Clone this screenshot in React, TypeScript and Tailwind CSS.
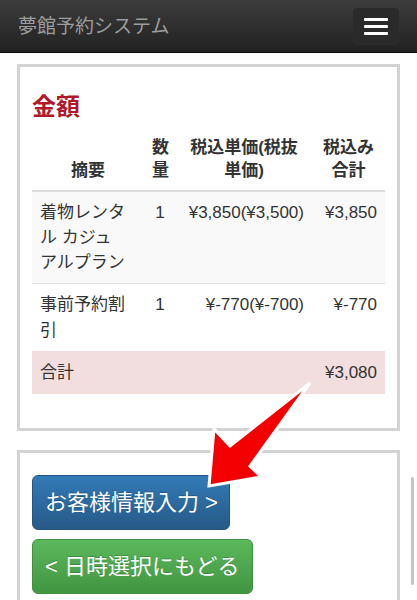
import React from "react";

const font = { fontFamily: '"Liberation Sans", "Noto Sans CJK JP", sans-serif' };

export default function App() {
  return (
    <div className="relative w-full min-h-[600px] bg-white text-[#333]" style={font}>
      {/* Navbar */}
      <div className="h-[53px] flex items-center justify-between bg-gradient-to-b from-[#3c3c3c] to-[#222] border-b border-[#080808] pl-[18px] pr-[18px]">
        <span className="text-[19px] text-[#9d9d9d] leading-none">夢館予約システム</span>
        <div className="w-[46px] h-[37px] border border-[#2c2c2c] rounded-[4px] flex flex-col items-center justify-center gap-[4px] bg-[#2a2a2a]">
          <span className="block w-[24px] h-[3px] bg-white rounded-[1px]" />
          <span className="block w-[24px] h-[3px] bg-white rounded-[1px]" />
          <span className="block w-[24px] h-[3px] bg-white rounded-[1px]" />
        </div>
      </div>

      <div className="px-[17px] pt-[11px] flex flex-col gap-[19px]">
        {/* Price panel */}
        <div className="border-[3px] border-[#d3d3d3] px-3 pt-[27px] pb-[34px]">
          <h3 className="text-[24px] font-bold leading-[26px] text-[#b0192b] mb-[8px]">金額</h3>
          <table className="w-full table-fixed border-collapse text-[17px]">
            <colgroup>
              <col className="w-[112px]" />
              <col className="w-[32px]" />
              <col className="w-[136px]" />
              <col className="w-[73px]" />
            </colgroup>
            <thead>
              <tr className="border-b-2 border-[#ddd]">
                <th className="p-2 align-bottom text-center font-bold leading-[23px]">摘要</th>
                <th className="p-2 align-bottom text-center font-bold leading-[23px]">
                  数<br />量
                </th>
                <th className="py-2 px-0 align-bottom text-center font-bold leading-[23px] whitespace-nowrap">
                  税込単価(税抜<br />単価)
                </th>
                <th className="p-2 align-bottom text-center font-bold leading-[23px] whitespace-nowrap">
                  税込み<br />合計
                </th>
              </tr>
            </thead>
            <tbody>
              <tr className="bg-[#f9f9f9] border-t border-[#ddd]">
                <td className="p-2 align-top leading-[25px] whitespace-nowrap">
                  着物レンタ<br />ル カジュ<br />アルプラン
                </td>
                <td className="p-2 align-top leading-[25px] text-center">1</td>
                <td className="p-2 align-top leading-[25px] text-right whitespace-nowrap">¥3,850(¥3,500)</td>
                <td className="p-2 align-top leading-[25px] text-right whitespace-nowrap">¥3,850</td>
              </tr>
              <tr className="border-t border-[#ddd]">
                <td className="p-2 align-top leading-[25.5px] whitespace-nowrap">
                  事前予約割<br />引
                </td>
                <td className="p-2 align-top leading-[25.5px] text-center">1</td>
                <td className="p-2 align-top leading-[25.5px] text-right whitespace-nowrap">¥-770(¥-700)</td>
                <td className="p-2 align-top leading-[25.5px] text-right whitespace-nowrap">¥-770</td>
              </tr>
              <tr className="bg-[#f2dede] border-t border-[#f2dede]">
                <td colSpan={3} className="p-2 leading-[26px]">合計</td>
                <td className="p-2 leading-[26px] text-right whitespace-nowrap">¥3,080</td>
              </tr>
            </tbody>
          </table>
        </div>

        {/* Buttons panel */}
        <div className="border-[3px] border-[#d3d3d3] px-3 pt-[22px] pb-[30px]">
          <div className="flex flex-col items-start gap-[9px]">
            <button className="w-[198px] h-[55px] px-3 text-left text-[22px] leading-[29px] whitespace-nowrap text-white rounded-[6px] border border-[#245580] bg-gradient-to-b from-[#337ab7] to-[#265a88] [text-shadow:0_-1px_0_rgba(0,0,0,0.2)]">
              お客様情報入力 &gt;
            </button>
            <button className="w-[221px] h-[55px] px-3 text-left text-[22px] leading-[29px] whitespace-nowrap text-white rounded-[6px] border border-[#3e8f3e] bg-gradient-to-b from-[#5cb85c] to-[#419641] [text-shadow:0_-1px_0_rgba(0,0,0,0.2)]">
              &lt; 日時選択にもどる
            </button>
          </div>
        </div>
      </div>

      {/* Red annotation arrow */}
      <svg
        className="absolute left-0 top-0 pointer-events-none"
        width="417"
        height="600"
        viewBox="0 0 417 600"
      >
        <polygon
          points="310,383 250,466 261,477 209,486 214,429 230,446"
          fill="#f50000"
          stroke="#ffffff"
          strokeWidth="3"
          strokeLinejoin="miter"
        />
      </svg>

      {/* Scroll indicator */}
      <div className="absolute left-[411px] top-[477px] w-[3px] h-[108px] rounded-full bg-[#c4c4c4]" />
    </div>
  );
}
